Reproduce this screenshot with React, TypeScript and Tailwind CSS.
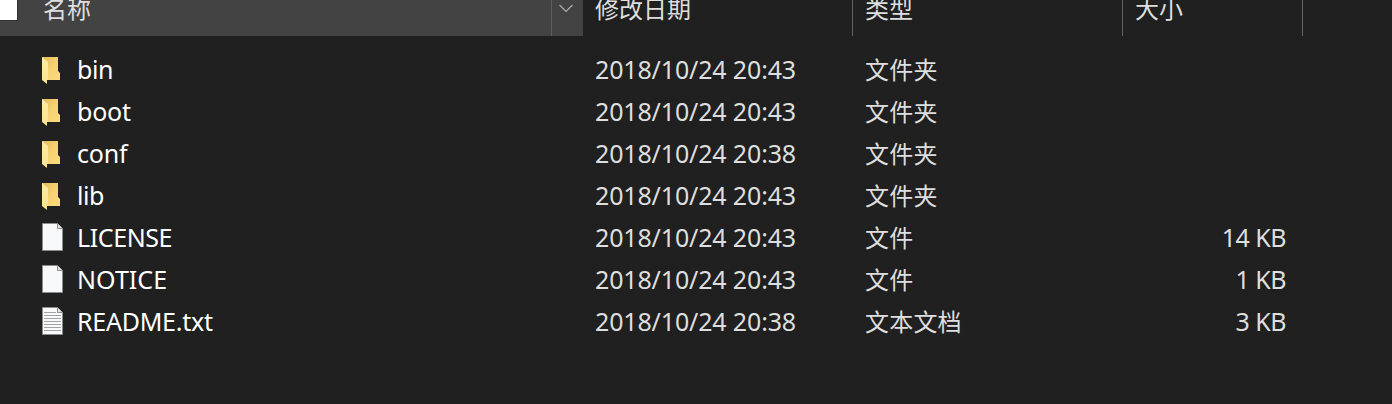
import type { ReactNode } from 'react';

type Kind = 'folder' | 'file' | 'text';

interface Entry {
  name: string;
  date: string;
  type: string;
  size?: string;
  kind: Kind;
  nameClass: string;
}

const entries: Entry[] = [
  { name: 'bin', date: '2018/10/24 20:43', type: '文件夹', kind: 'folder', nameClass: 'tracking-[-0.4px]' },
  { name: 'boot', date: '2018/10/24 20:43', type: '文件夹', kind: 'folder', nameClass: 'tracking-[-0.2px]' },
  { name: 'conf', date: '2018/10/24 20:38', type: '文件夹', kind: 'folder', nameClass: 'tracking-[-0.2px]' },
  { name: 'lib', date: '2018/10/24 20:43', type: '文件夹', kind: 'folder', nameClass: 'tracking-[-0.4px]' },
  { name: 'LICENSE', date: '2018/10/24 20:43', type: '文件', size: '14 KB', kind: 'file', nameClass: 'tracking-[-0.4px]' },
  { name: 'NOTICE', date: '2018/10/24 20:43', type: '文件', size: '1 KB', kind: 'file', nameClass: 'tracking-[0.05px]' },
  { name: 'README.txt', date: '2018/10/24 20:38', type: '文本文档', size: '3 KB', kind: 'text', nameClass: 'tracking-[-0.25px]' },
];

function FolderIcon() {
  return (
    <svg width="22" height="28" viewBox="0 0 22 28" className="block">
      <defs>
        <linearGradient id="folder-back" x1="0" y1="0" x2="1" y2="1">
          <stop offset="0" stopColor="#e6b95a" />
          <stop offset="0.5" stopColor="#f5d272" />
          <stop offset="1" stopColor="#fbdc80" />
        </linearGradient>
        <linearGradient id="folder-flap" x1="0" y1="0" x2="0" y2="1">
          <stop offset="0" stopColor="#ffeaa6" />
          <stop offset="1" stopColor="#fde293" />
        </linearGradient>
      </defs>
      <path d="M0 1H16V15L18 17V24H0Z" fill="url(#folder-back)" />
      <path d="M0 1L6 6V24H5V28L0 24Z" fill="url(#folder-flap)" />
    </svg>
  );
}

function PageIcon({ lined }: { lined: boolean }) {
  return (
    <svg width="22" height="28" viewBox="0 0 22 28" className="-mt-0.5 block">
      <path d="M0.5 0.5H15.5L20.5 5.5V27.5H0.5Z" fill="#f8f9fa" stroke="#8c8c8c" />
      <path d="M15.5 0.5V5.5H20.5" fill="#e6e6e6" stroke="#8c8c8c" />
      {lined && (
        <path d="M2 5.5H14M2 8.5H19M2 11.5H19M2 14.5H19M2 17.5H19M2 20.5H19M2 23.5H19" stroke="#a3a3a3" fill="none" />
      )}
    </svg>
  );
}

function HeaderCell({ className, children }: { className: string; children: ReactNode }) {
  return <div className={`flex h-9 shrink-0 items-start leading-[18px] ${className}`}>{children}</div>;
}

export default function App() {
  return (
    <div className="h-[404px] w-[1392px] overflow-hidden bg-[#202020] font-['Noto_Sans','Noto_Sans_CJK_SC',sans-serif] text-[25px] text-[#dedede]">
      <header className="flex h-9 text-[24px]">
        <HeaderCell className="w-[583px] bg-[#434343]">
          <div className="h-[21px] w-[18px] border-r border-b border-[#333333] bg-white" />
          <span className="ml-[25px] flex-1">名称</span>
          <div className="flex h-9 w-8 border-l border-[#5e5e5e] pt-[3px] pl-[7px]">
            <svg width="14" height="10" viewBox="0 0 14 10" fill="none" stroke="#b0b0b0" strokeWidth="1.1">
              <path d="M0.5 2L7 8.5L13.5 2" />
            </svg>
          </div>
        </HeaderCell>
        <HeaderCell className="w-[270px] border-r border-[#636363] pl-3">修改日期</HeaderCell>
        <HeaderCell className="w-[270px] border-r border-[#636363] pl-3">类型</HeaderCell>
        <HeaderCell className="w-[180px] border-r border-[#636363] pl-3">大小</HeaderCell>
      </header>
      <main className="pt-[13px]">
        {entries.map((e) => (
          <div key={e.name} className="flex h-[42px] items-center whitespace-nowrap leading-[40px]">
            <div className="flex w-[595px] shrink-0 items-center pl-[42px]">
              {e.kind === 'folder' ? <FolderIcon /> : <PageIcon lined={e.kind === 'text'} />}
              <span className={`-mt-0.5 ml-[13px] text-white ${e.nameClass}`}>{e.name}</span>
            </div>
            <div className="w-[270px] shrink-0 pb-0.5 tracking-[-0.15px]">{e.date}</div>
            <div className="w-[270px] shrink-0 text-[24px] tracking-[0.2px]">{e.type}</div>
            <div className="w-[151px] shrink-0 pb-0.5 text-right tracking-[-0.5px]">{e.size}</div>
          </div>
        ))}
      </main>
    </div>
  );
}
